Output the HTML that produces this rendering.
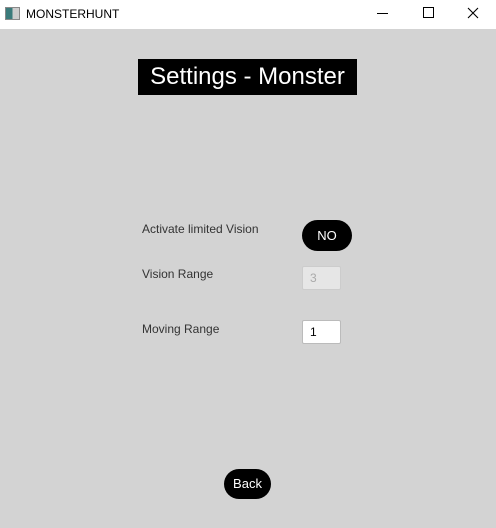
<!DOCTYPE html>
<html><head><style>
body{margin:0;width:496px;height:528px;background:#d3d3d3;font-family:"Liberation Sans",sans-serif;position:relative;overflow:hidden}
.bar{position:absolute;left:0;top:0;width:496px;height:29px;background:#fff}
.t{position:absolute;font-size:12px;color:#333}
</style></head><body>
<div class="bar">
<div style="position:absolute;left:5px;top:7px;width:13px;height:11px;border:1px solid #888;background:linear-gradient(90deg,#3a7a7a 50%,#ccc 50%)"></div>
<div style="position:absolute;left:26px;top:7px;font-size:12px;color:#000">MONSTERHUNT</div>
<div style="position:absolute;left:377px;top:13px;width:11px;height:1px;background:#000"></div>
<div style="position:absolute;left:423px;top:7px;width:9px;height:9px;border:1px solid #000"></div>
<svg style="position:absolute;left:467px;top:7px" width="12" height="12"><path d="M1 1L11 11M11 1L1 11" stroke="#000" stroke-width="1.1"/></svg>
</div>
<div style="position:absolute;left:138px;top:59px;width:219px;height:36px;background:#000;color:#fff;font-size:24px;line-height:36px;text-align:center">Settings - Monster</div>
<div class="t" style="left:142px;top:222px">Activate limited Vision</div>
<div style="position:absolute;left:302px;top:220px;width:50px;height:31px;border-radius:16px;background:#000;color:#fff;font-size:13px;line-height:31px;text-align:center">NO</div>
<div class="t" style="left:142px;top:267px">Vision Range</div>
<div style="position:absolute;left:302px;top:266px;width:36px;height:22px;border:1px solid #ccc;background:#e6e6e6;color:#aaa;font-size:12px;line-height:22px;padding-left:7px;box-sizing:content-box;width:30px;border-radius:2px">3</div>
<div class="t" style="left:142px;top:322px">Moving Range</div>
<div style="position:absolute;left:302px;top:320px;width:30px;height:22px;border:1px solid #bbb;background:#fff;color:#000;font-size:12px;line-height:22px;padding-left:7px;border-radius:2px">1</div>
<div style="position:absolute;left:224px;top:469px;width:47px;height:30px;border-radius:15px;background:#000;color:#fff;font-size:13px;line-height:30px;text-align:center">Back</div>
</body></html>
